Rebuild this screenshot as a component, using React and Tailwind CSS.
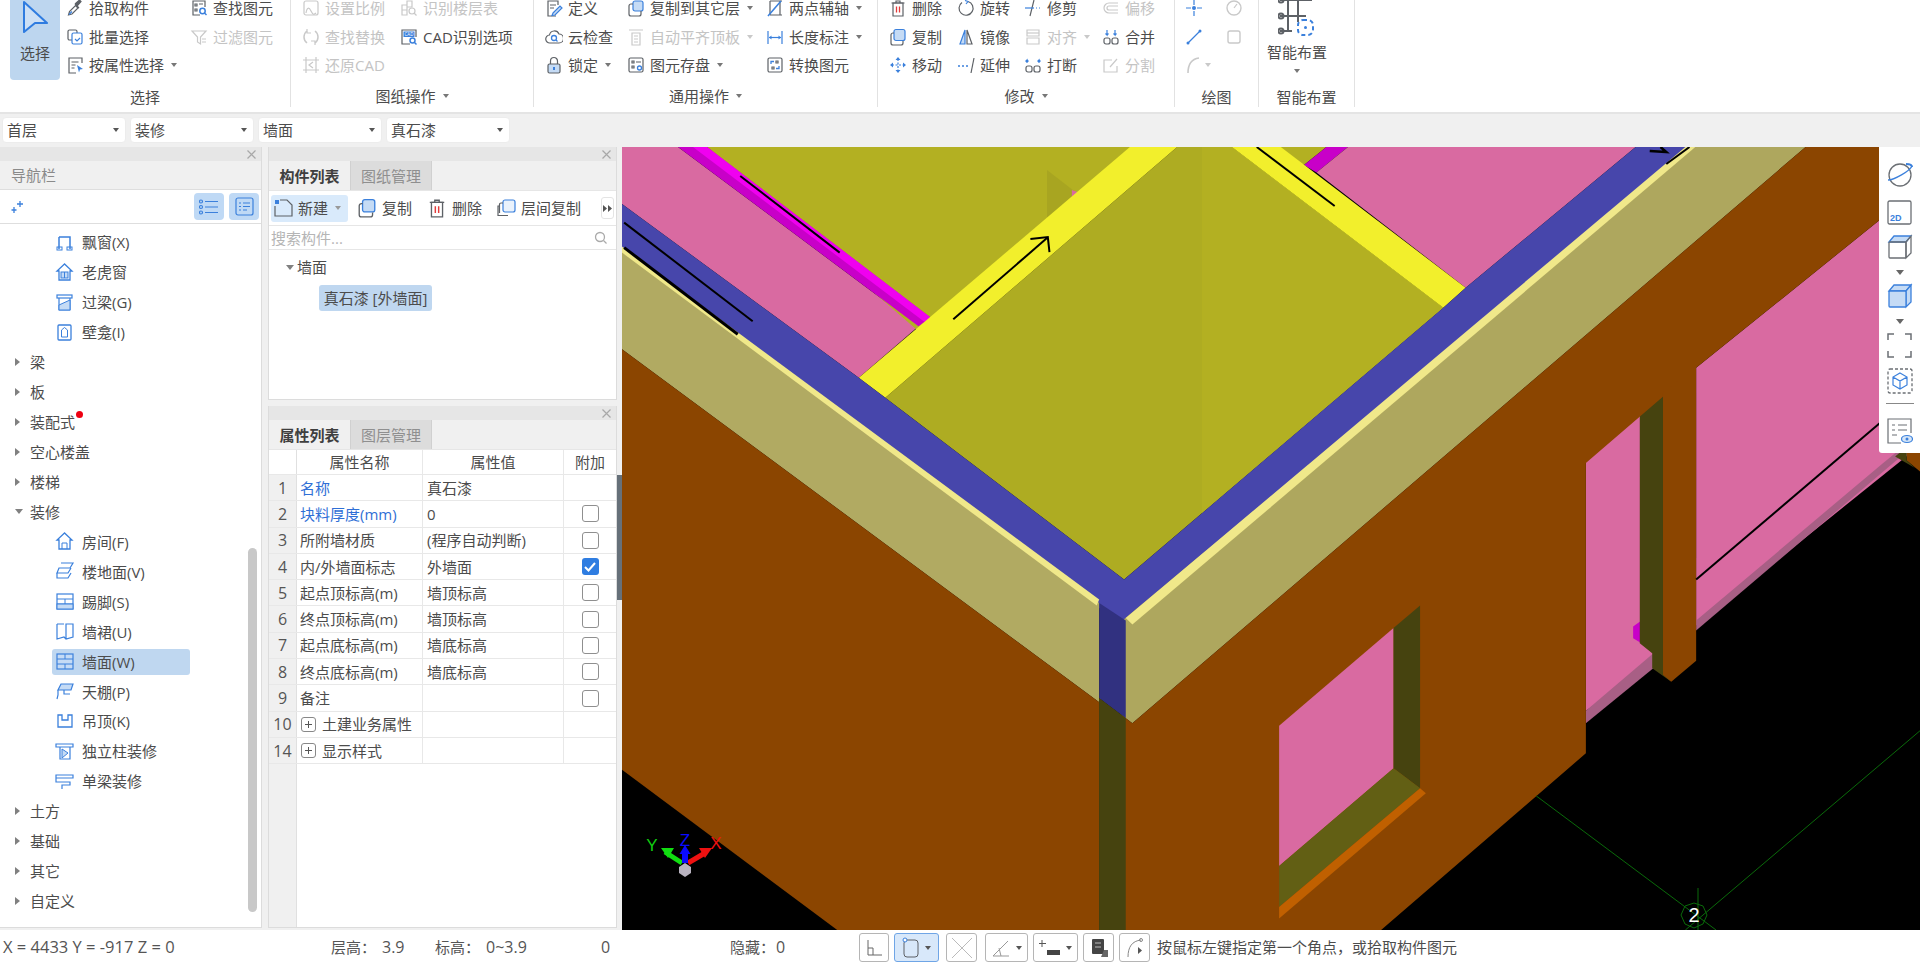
import React from "react";

const B = "#3b80dc";
const G = "#5d6166";
const L = "#c5dbf5";
const D = "#c9c9c9";

const paths = {
  pick: <><path d="M2.5 16l1-3.5 6-6 2.500 2.500-6 6z" stroke={G}/><path d="M3 15.500l3-3" stroke={B}/><path d="M9 5l4 4M11 7l4-4.500-1.500-1.500-4.500 4" stroke={G} fill={G}/></>,
  batch: <><rect x="2" y="2" width="9" height="10" rx="1.500" stroke={G}/><rect x="6" y="5" width="10" height="11" rx="1.500" fill="#fff" stroke={B}/><path d="M9 11l2 2 3-3" stroke={B}/></>,
  propSel: <><path d="M16 7V2H3v15h7" stroke={G}/><path d="M5.500 6h7M5.500 9h4M5.500 12h3" stroke={G}/><path d="M11 9l6 4-3 .5-1 3z" fill={B} stroke="none"/></>,
  find: <><path d="M10 16H3V2h12v6" stroke={G}/><path d="M5 5h2v2H5zM9 5h4M5 10h2v2H5z" stroke={G}/><circle cx="12.500" cy="12" r="2.700" stroke={B} strokeWidth="1.500"/><path d="M14.500 14l2 2" stroke={B} strokeWidth="1.500"/></>,
  filter: <><path d="M2 3h14l-5.500 6v7l-3-2V9z" stroke={D}/><path d="M12 11h4M12 14h4" stroke={D}/></>,
  scale: <><rect x="2" y="2" width="14" height="14" rx="2" stroke={D}/><path d="M4 14c1-6 3-6 5-2s3 4 5 2" stroke={D}/></>,
  tableDis: <><path d="M2 6h5v10H2zM7 2h5v6H7zM2 11h5" stroke={D}/><circle cx="12" cy="12" r="3" stroke={D}/><path d="M14 14l2.500 2.500" stroke={D}/></>,
  replace: <><path d="M5 3C1 6 1 12 5 15M13 3c4 3 4 9 0 12" stroke={D} strokeWidth="1.500"/><path d="M5 1v4H9M13 17v-4H9" stroke={D}/></>,
  restore: <><path d="M1 4h16M1 14h16M4 1v16M14 1v16" stroke={D}/><path d="M11 6l-4 3 4 3" stroke={D}/></>,
  cad: <><path d="M10 16H2V2h14v7" stroke={G}/><rect x="3.500" y="3.500" width="11" height="5.500" fill={B} stroke="none"/><text x="9" y="8" fontSize="4.500" fill="#fff" stroke="none" textAnchor="middle">CAD</text><circle cx="12.500" cy="12.500" r="2.500" stroke={B} strokeWidth="1.500"/><path d="M14.500 14.500l2 2" stroke={B} strokeWidth="1.500"/></>,
  define: <><path d="M13 6V2H3v15h8" stroke={G}/><path d="M5 6h6M5 9h4" stroke={G}/><path d="M8 14l7-7 2 2-7 7-3 .5z" fill={L} stroke={B}/></>,
  cloud: <><path d="M5 15a4 4 0 0 1-.5-8A5 5 0 0 1 14 6a4.500 4.500 0 0 1 0 9z" stroke={G}/><circle cx="9" cy="10" r="2.500" stroke={B} strokeWidth="1.300"/><path d="M11 12l1.500 1.500" stroke={B}/></>,
  lock: <><rect x="3" y="8" width="12" height="9" rx="1.500" fill={L} stroke={G}/><path d="M5.500 8V5a3.500 3.500 0 0 1 7 0v3" stroke={G}/><path d="M9 11v3" stroke={B} strokeWidth="2"/></>,
  copyTo: <><rect x="6" y="2" width="10" height="10" rx="2" fill={L} stroke={B}/><path d="M6 5H4a2 2 0 0 0-2 2v8a2 2 0 0 0 2 2h8a2 2 0 0 0 2-2v-3" stroke={G}/></>,
  level: <><path d="M2 2h14M5 5h8v12H5z" stroke={D}/><path d="M7 8h4M7 11h4M7 14h4" stroke={D}/></>,
  store: <><rect x="2" y="2" width="14" height="14" rx="1.500" stroke={G}/><path d="M5 5h2v2H5zM9 6h5M5 10h2v2H5z" stroke={G}/><circle cx="12.500" cy="12" r="2" stroke={B} strokeWidth="1.300"/></>,
  twoPt: <><path d="M4 2h12M4 16h12" stroke={G}/><path d="M4 2v14M14 2v14" stroke={G}/><path d="M2 17L15 2" stroke={B} strokeWidth="1.600"/></>,
  dim: <><path d="M2 3v13M16 3v13" stroke={B}/><path d="M3 9.500h12" stroke={B}/><path d="M3 9.500l2.500-2v4zM15 9.500l-2.500-2v4z" fill={B} stroke="none"/></>,
  convert: <><rect x="2" y="2" width="14" height="14" rx="1.500" stroke={G}/><path d="M5 8V5.500h3M13 10v2.500h-3" stroke={B} strokeWidth="1.300"/><path d="M6 11h2v2H6zM10 5h2v2h-2z" stroke={G}/></>,
  del: <><path d="M4 4h10v13H4z" stroke={G}/><path d="M2.500 4h13M7 4V2h4v2" stroke={G}/><path d="M7.500 7.500v6M10.500 7.500v6" stroke="#e23b3b" strokeWidth="1.300"/></>,
  copy: <><rect x="5" y="1.500" width="11" height="11" rx="2" fill={L} stroke={B}/><path d="M5 5H4a2 2 0 0 0-2 2v8a2 2 0 0 0 2 2h8a2 2 0 0 0 2-2v-2" stroke={G}/></>,
  move: <><path d="M9 3v12M3 9h12" stroke={B} strokeDasharray="2 1.500"/><path d="M9 1l-2.500 3h5zM9 17l-2.500-3h5zM1 9l3-2.500v5zM17 9l-3-2.500v5z" fill={B} stroke="none"/></>,
  rotate: <><path d="M11 2.500A7 7 0 1 1 5 3.500" stroke={G}/><path d="M8 1.500l3 1-2 2.500" stroke={B}/></>,
  mirror: <><path d="M8 2L3 16h5z" fill={L} stroke={B}/><path d="M10 2l5 14h-5z" stroke={G}/></>,
  extend: <><path d="M1 10h2M5 10h2M9 10h2" stroke={B} strokeWidth="1.300"/><path d="M17 2l-3 15" stroke={G}/></>,
  trim: <><path d="M10 1L6 17" stroke={G}/><path d="M1 9h9" stroke={B}/><path d="M12 9h1M15 9h1" stroke={B}/></>,
  align: <><path d="M3 2h12v6H3zM3 10h12v6H3z" stroke={D}/><path d="M3 5h12" stroke={D}/></>,
  breakI: <><rect x="2" y="10" width="6" height="6" rx="2" stroke={G}/><rect x="10" y="10" width="6" height="6" rx="2" stroke={G}/><path d="M3 7V4l-1.500 1.500M3 4l1.500 1.500M15 7V4l-1.500 1.500M15 4l1.500 1.500" stroke={B}/></>,
  merge: <><rect x="2" y="10" width="6" height="6" rx="2" stroke={G}/><rect x="10" y="10" width="6" height="6" rx="2" stroke={G}/><path d="M5 2v5l-1.500-1.500M5 7l1.500-1.500M13 2v5l-1.500-1.500M13 7l1.500-1.500" stroke={B}/></>,
  offset: <><path d="M16 4H7a5 5 0 0 0 0 10h9" stroke={D}/><path d="M16 7H7a2 2 0 0 0 0 4h9" stroke={D}/></>,
  split: <><path d="M10 4H2v12h13v-6" stroke={D}/><path d="M8 11l7-8" stroke={D}/></>,
  point: <><path d="M9 1v5M9 12v5M1 9h5M12 9h5" stroke={B}/><circle cx="9" cy="9" r="2" fill={B} stroke="none"/></>,
  circ: <><circle cx="9" cy="9" r="7" stroke={D} strokeWidth="1.400"/><path d="M9 9l3-4" stroke={D}/></>,
  line: <><path d="M3 15L15 3" stroke={B} strokeWidth="1.300"/><circle cx="3" cy="15" r="1.500" fill={B} stroke="none"/><circle cx="15" cy="3" r="1.500" fill={B} stroke="none"/></>,
  rect: <rect x="3" y="3" width="12" height="12" rx="2" stroke={D} strokeWidth="1.400"/>,
  arc: <path d="M3 17C3 8 7 3 14 2" stroke={D} strokeWidth="1.600"/>,
};

function Ic({ n, s = 18 }) {
  return (
    <svg width={s} height={s} viewBox="0 0 18 18" fill="none" strokeWidth="1.200" className="shrink-0">
      {paths[n]}
    </svg>
  );
}

function Caret({ dis, tight }) {
  return <span className={`inline-block ${tight ? "ml-[2px]" : "ml-[7px]"} w-0 h-0 border-l-[3.500px] border-r-[3.500px] border-t-[4px] border-l-transparent border-r-transparent ${dis ? "border-t-[#c9c9c9]" : "border-t-[#777]"}`} />;
}

function Tool({ i, t, c, d }) {
  return (
    <div className={`h-[28.500px] flex items-center whitespace-nowrap gap-[5px] ${d ? "text-[#c4c4c4]" : "text-[#4c4c4c]"}`}>
      <Ic n={i} />
      <span>{t}</span>
      {c && <Caret dis={d} tight />}
    </div>
  );
}

function Col({ w, items }) {
  return (
    <div className="flex flex-col shrink-0" style={{ width: w }}>
      {items.map((it) => (
        <Tool key={it.t + it.i} {...it} />
      ))}
    </div>
  );
}

function Group({ w, pl, label, caret, low, children }) {
  return (
    <div className="flex flex-col h-[107px] border-r border-[#e2e2e2] shrink-0" style={{ width: w }}>
      <div className="h-[88px] flex -mt-[6px]" style={{ paddingLeft: pl }}>
        {children}
      </div>
      <div className={`flex-1 flex items-center justify-center text-[#4c4c4c] ${low ? "pt-[6px]" : "pt-[2px]"}`}>
        {label}
        {caret && <Caret />}
      </div>
    </div>
  );
}

function Ribbon() {
  return (
    <div className="h-[114px] bg-white border-b-2 border-[#e4e4e4] flex overflow-hidden shrink-0">
      <Group w={291} pl={10} label="选择" low>
        <div className="w-[50px] h-[86px] mr-[6px] bg-[#bdd6ef] rounded-b-[4px] flex flex-col items-center pt-[3px] text-[#4c4c4c] shrink-0">
          <svg width="30" height="36" viewBox="0 0 30 36" fill="none">
            <path d="M4 5L27 26H15L4 35Z" fill="#cde0f5" stroke="#2f7ce0" strokeWidth="2" strokeLinejoin="round" />
          </svg>
          <span className="mt-[10px]">选择</span>
        </div>
        <Col w={124} items={[{ i: "pick", t: "拾取构件" }, { i: "batch", t: "批量选择" }, { i: "propSel", t: "按属性选择", c: 1 }]} />
        <Col w={100} items={[{ i: "find", t: "查找图元" }, { i: "filter", t: "过滤图元", d: 1 }]} />
      </Group>
      <Group w={243} pl={11} label="图纸操作" caret>
        <Col w={98} items={[{ i: "scale", t: "设置比例", d: 1 }, { i: "replace", t: "查找替换", d: 1 }, { i: "restore", t: "还原CAD", d: 1 }]} />
        <Col w={120} items={[{ i: "tableDis", t: "识别楼层表", d: 1 }, { i: "cad", t: "CAD识别选项" }]} />
      </Group>
      <Group w={344} pl={11} label="通用操作" caret>
        <Col w={82} items={[{ i: "define", t: "定义" }, { i: "cloud", t: "云检查" }, { i: "lock", t: "锁定", c: 1 }]} />
        <Col w={139} items={[{ i: "copyTo", t: "复制到其它层", c: 1 }, { i: "level", t: "自动平齐顶板", c: 1, d: 1 }, { i: "store", t: "图元存盘", c: 1 }]} />
        <Col w={105} items={[{ i: "twoPt", t: "两点辅轴", c: 1 }, { i: "dim", t: "长度标注", c: 1 }, { i: "convert", t: "转换图元" }]} />
      </Group>
      <Group w={297} pl={11} label="修改" caret>
        <Col w={68} items={[{ i: "del", t: "删除" }, { i: "copy", t: "复制" }, { i: "move", t: "移动" }]} />
        <Col w={67} items={[{ i: "rotate", t: "旋转" }, { i: "mirror", t: "镜像" }, { i: "extend", t: "延伸" }]} />
        <Col w={78} items={[{ i: "trim", t: "修剪" }, { i: "align", t: "对齐", c: 1, d: 1 }, { i: "breakI", t: "打断" }]} />
        <Col w={66} items={[{ i: "offset", t: "偏移", d: 1 }, { i: "merge", t: "合并" }, { i: "split", t: "分割", d: 1 }]} />
      </Group>
      <Group w={84} pl={10} label="绘图" low>
        <div className="flex flex-col w-[40px] shrink-0">
          <div className="h-[28.500px] flex items-center"><Ic n="point" /></div>
          <div className="h-[28.500px] flex items-center"><Ic n="line" /></div>
          <div className="h-[28.500px] flex items-center"><Ic n="arc" /><Caret dis tight /></div>
        </div>
        <div className="flex flex-col w-[24px] shrink-0">
          <div className="h-[28.500px] flex items-center"><Ic n="circ" /></div>
          <div className="h-[28.500px] flex items-center"><Ic n="rect" /></div>
        </div>
      </Group>
      <Group w={96} pl={0} label="智能布置" low>
        <div className="w-[76px] flex flex-col items-center text-[#4c4c4c]">
          <svg width="38" height="44" viewBox="0 0 38 44" fill="none" strokeWidth="2" className="shrink-0">
            <path d="M10 0v36M20 0v28M2 6h32M2 22h26M2 37h12" stroke="#5d6166" />
            <circle cx="3" cy="6" r="2.500" stroke="#5d6166" />
            <circle cx="3" cy="22" r="2.500" stroke="#5d6166" />
            <circle cx="3" cy="37" r="2.500" stroke="#5d6166" />
            <rect x="20" y="26" width="15" height="15" rx="5" stroke="#3b80dc" strokeDasharray="4 3" />
            <circle cx="27.500" cy="33.500" r="1.500" fill="#3b80dc" />
          </svg>
          <span className="mt-[4px] leading-[20px]">智能布置</span>
          <span className="mt-[7px] w-0 h-0 border-l-[3.500px] border-r-[3.500px] border-t-[4px] border-l-transparent border-r-transparent border-t-[#777]" />
        </div>
      </Group>
    </div>
  );
}

function Combo({ t }) {
  return (
    <div className="w-[124px] h-[26px] bg-white rounded-[4px] flex items-center justify-between pl-[4px] pr-[6px] text-[#4c4c4c] border border-[#ececec]">
      <span>{t}</span>
      <span className="w-0 h-0 border-l-[3px] border-r-[3px] border-t-[4px] border-l-transparent border-r-transparent border-t-[#555]" />
    </div>
  );
}

function Close() {
  return (
    <div className="h-[14px] bg-[#e6e6e6] flex items-center justify-end pr-[5px] shrink-0">
      <svg width="9" height="9" viewBox="0 0 9 9" stroke="#a8a8a8" strokeWidth="1.200"><path d="M0.500 0.500l8 8M8.500 0.500l-8 8" /></svg>
    </div>
  );
}

const navI = {
  bay: <><path d="M4 4h11v12M4 4v12" stroke={B} strokeWidth="1.500" /><rect x="2" y="14" width="5" height="3" stroke={B} /><rect x="12" y="14" width="5" height="3" stroke={B} /></>,
  dormer: <><path d="M9.500 1L2 8h2v9h11V8h2z" stroke={B} strokeWidth="1.300" /><rect x="6" y="9" width="7" height="6" fill={L} stroke={B} /><path d="M9.500 9v6" stroke={B} /></>,
  lintel: <><rect x="2" y="2" width="15" height="3" stroke={B} strokeWidth="1.200" /><path d="M4 5v12h11V5" stroke={B} strokeWidth="1.200" /><path d="M4 17V12l11-5v10z" fill={L} stroke={B} /></>,
  niche: <><rect x="3" y="2" width="13" height="15" rx="1" stroke={B} strokeWidth="1.300" /><path d="M6.500 14V7l3-2.500 3 2.500v7z" stroke={B} /></>,
  room: <><path d="M9.500 1L2 8h2v9h11V8h2z" stroke={B} strokeWidth="1.300" /><path d="M7 17v-6h5v6" stroke={B} /></>,
  floor: <><path d="M6 1h12l-3 5H4L2 11h11l3-5" stroke={B} strokeWidth="1.200" /><path d="M2 11v5h11l3-5" stroke={B} strokeWidth="1.200" /></>,
  skirt: <><rect x="2" y="2" width="16" height="15" stroke={B} strokeWidth="1.200" /><path d="M2 7h16M2 12h16M10 7v5" stroke={B} /><rect x="2" y="12" width="16" height="5" fill={L} stroke={B} /></>,
  dado: <><path d="M2 2v15l7-2 2 2 7-2V2h-7v15M9 2H2" stroke={B} strokeWidth="1.200" /></>,
  wall: <><rect x="2" y="2" width="16" height="15" fill={L} stroke={B} strokeWidth="1.200" /><path d="M2 7h16M2 12h16M10 2v5M10 12v5" stroke={B} /></>,
  ceil: <><path d="M6 2h12l-2 6H3z" fill={L} stroke={B} strokeWidth="1.200" /><path d="M3 8v5l-1 4M9 8v4h6" stroke={B} strokeWidth="1.200" /></>,
  drop: <><path d="M3 3v12h14V3h-4v5H7V3z" stroke={B} strokeWidth="1.300" /></>,
  col: <><path d="M1 2h17v3H1zM5 5v12h10V5" stroke={B} strokeWidth="1.200" /><path d="M7 7l6 4-6 5z" fill={L} stroke={B} /></>,
  beam: <><path d="M1 3h17v3H1zM1 6v4h14v3H7v4" stroke={B} strokeWidth="1.200" /></>,
};

function NavItem({ i, t, sel }) {
  return (
    <div className="h-[29.950px] flex items-center pl-[52px]">
      <div className={`w-[138px] h-[26px] flex items-center rounded-[3px] pl-[3px] ${sel ? "bg-[#bfd7f0]" : ""}`}>
        <svg width="20" height="19" viewBox="0 0 20 19" fill="none" className="shrink-0">{navI[i]}</svg>
        <span className="ml-[7px] whitespace-nowrap">{t}</span>
      </div>
    </div>
  );
}

function NavGroup({ t, open, dot }) {
  return (
    <div className="h-[29.950px] flex items-center pl-[15px]">
      {open ? (
        <span className="w-0 h-0 border-l-[4px] border-r-[4px] border-t-[5px] border-l-transparent border-r-transparent border-t-[#808080] mr-[7px]" />
      ) : (
        <span className="w-0 h-0 border-t-[4px] border-b-[4px] border-l-[5px] border-t-transparent border-b-transparent border-l-[#808080] mr-[10px]" />
      )}
      <span className="relative whitespace-nowrap">
        {t}
        {dot && <span className="absolute -right-[8px] -top-[1px] w-[7px] h-[7px] rounded-full bg-[#ee0011]" />}
      </span>
    </div>
  );
}

function Nav() {
  return (
    <div className="w-[262px] h-[781px] bg-white border-r border-b border-[#dcdcdc] flex flex-col shrink-0 overflow-hidden">
      <Close />
      <div className="h-[29px] bg-[#f0f0f0] border-b border-[#dedede] flex items-center pl-[11px] text-[#8a8a8a] shrink-0">导航栏</div>
      <div className="h-[34px] border-b border-[#dedede] flex items-center pl-[11px] pr-[2px] shrink-0">
        <svg width="14" height="14" viewBox="0 0 14 14" stroke={B} strokeWidth="1.300" fill="none"><path d="M9 1v6M6 4h6M3 7v6M0.500 10h5" /></svg>
        <div className="flex-1" />
        <div className="w-[30px] h-[27px] bg-[#bfd9f5] rounded-[4px] flex items-center justify-center">
          <svg width="20" height="16" viewBox="0 0 20 16" fill="none" stroke={B} strokeWidth="1.200"><circle cx="2" cy="2.500" r="1.500" /><circle cx="2" cy="8" r="1.500" /><circle cx="2" cy="13.500" r="1.500" /><path d="M6 2.500h13M6 8h13M6 13.500h13" /></svg>
        </div>
        <div className="w-[30px] h-[27px] ml-[5px] bg-[#bfd9f5] rounded-[4px] flex items-center justify-center">
          <svg width="19" height="19" viewBox="0 0 19 19" fill="none" stroke={B} strokeWidth="1.200"><rect x="1" y="1" width="17" height="17" rx="2" /><path d="M4 6h2M8 6h7M4 9.500h2M8 9.500h7M4 13h2M8 13h4" /></svg>
        </div>
      </div>
      <div className="flex-1 flex pt-[3.500px] text-[#4c4c4c] text-[15px] overflow-hidden">
        <div className="flex-1 flex flex-col min-w-0">
          <NavItem i="bay" t="飘窗(X)" />
          <NavItem i="dormer" t="老虎窗" />
          <NavItem i="lintel" t="过梁(G)" />
          <NavItem i="niche" t="壁龛(I)" />
          <NavGroup t="梁" />
          <NavGroup t="板" />
          <NavGroup t="装配式" dot />
          <NavGroup t="空心楼盖" />
          <NavGroup t="楼梯" />
          <NavGroup t="装修" open />
          <NavItem i="room" t="房间(F)" />
          <NavItem i="floor" t="楼地面(V)" />
          <NavItem i="skirt" t="踢脚(S)" />
          <NavItem i="dado" t="墙裙(U)" />
          <NavItem i="wall" t="墙面(W)" sel />
          <NavItem i="ceil" t="天棚(P)" />
          <NavItem i="drop" t="吊顶(K)" />
          <NavItem i="col" t="独立柱装修" />
          <NavItem i="beam" t="单梁装修" />
          <NavGroup t="土方" />
          <NavGroup t="基础" />
          <NavGroup t="其它" />
          <NavGroup t="自定义" />
        </div>
        <div className="w-[14px] shrink-0 pl-[1px] pt-[320px]">
          <div className="w-[9px] h-[364px] rounded-[5px] bg-[#c8c8c8]" />
        </div>
      </div>
    </div>
  );
}

function Tabs({ a, b }) {
  return (
    <div className="h-[30px] bg-[#f0f0f0] flex shrink-0 border-b border-[#e6e6e6]">
      <div className="w-[81px] flex items-center justify-center font-bold text-[#3f3f3f]">{a}</div>
      <div className="w-[82px] bg-[#dcdcdc] flex items-center justify-center text-[#8f8f8f] border-x border-[#d0d0d0]">{b}</div>
    </div>
  );
}

function CompPanel() {
  return (
    <div className="h-[253px] bg-white border-x border-b border-[#dcdcdc] flex flex-col overflow-hidden shrink-0">
      <Close />
      <Tabs a="构件列表" b="图纸管理" />
      <div className="h-[35px] border-b border-[#e6e6e6] flex items-center pl-[2px] text-[#4c4c4c] shrink-0">
        <div className="w-[77px] h-[27px] bg-[#d9eafb] rounded-[3px] flex items-center pl-[2px]">
          <svg width="20" height="20" viewBox="0 0 20 20" fill="none" stroke="#5d6166" strokeWidth="1.200"><path d="M7 2h7l5 5v11H2V8" /><path d="M2 2h4v4H2z" fill={B} stroke="none" /></svg>
          <span className="ml-[5px]">新建</span>
          <span className="ml-[7px] w-0 h-0 border-l-[3px] border-r-[3px] border-t-[4px] border-l-transparent border-r-transparent border-t-[#999]" />
        </div>
        <div className="ml-[9px]"><Ic n="copy" s={20} /></div>
        <span className="ml-[5px]">复制</span>
        <div className="ml-[15px]"><Ic n="del" s={20} /></div>
        <span className="ml-[5px]">删除</span>
        <div className="ml-[14px]">
          <svg width="20" height="18" viewBox="0 0 20 18" fill="none" strokeWidth="1.200"><rect x="7" y="1" width="12" height="12" rx="2" stroke={B} fill="#eaf2fc" /><path d="M7 4H5a1.500 1.500 0 0 0-1.500 1.500V14M3.500 7H2v9.500h10" stroke="#5d6166" /></svg>
        </div>
        <span className="ml-[5px] whitespace-nowrap">层间复制</span>
        <div className="flex-1" />
        <div className="w-[13px] h-[22px] mr-[2px] border border-[#e4e4e4] rounded-[3px] flex items-center justify-center">
          <svg width="9" height="7" viewBox="0 0 9 7" fill="#555"><path d="M0 0l4 3.500-4 3.500zM5 0l4 3.500-4 3.500z" /></svg>
        </div>
      </div>
      <div className="h-[24px] border-b border-[#e6e6e6] flex items-center justify-between pl-[2px] pr-[9px] text-[#b5b5b5] shrink-0">
        <span>搜索构件...</span>
        <svg width="13" height="13" viewBox="0 0 13 13" fill="none" stroke="#aaa" strokeWidth="1.300"><circle cx="6" cy="6" r="4.500" /><path d="M9.500 9.500l3 3" /></svg>
      </div>
      <div className="flex-1 pt-[4px] pl-[17px] text-[#4c4c4c]">
        <div className="h-[26px] flex items-center">
          <span className="w-0 h-0 border-l-[4px] border-r-[4px] border-t-[5px] border-l-transparent border-r-transparent border-t-[#808080]" />
          <span className="ml-[3px]">墙面</span>
        </div>
        <div className="ml-[33px] mt-[5px] w-[113px] h-[26px] bg-[#bfd7f0] rounded-[3px] flex items-center justify-center whitespace-nowrap">真石漆 [外墙面]</div>
      </div>
    </div>
  );
}

function Check({ on }) {
  return on ? (
    <div className="w-[17px] h-[17px] rounded-[3px] bg-[#2f7de1] flex items-center justify-center">
      <svg width="12" height="10" viewBox="0 0 12 10" fill="none" stroke="#fff" strokeWidth="2"><path d="M1 5l3.500 3.500L11 1" /></svg>
    </div>
  ) : (
    <div className="w-[17px] h-[17px] rounded-[3px] border border-[#8f8f8f] bg-white" />
  );
}

const rows = [
  ["1", "名称", "真石漆", 0, 1],
  ["2", "块料厚度(mm)", "0", 1, 1],
  ["3", "所附墙材质", "(程序自动判断)", 1],
  ["4", "内/外墙面标志", "外墙面", 2],
  ["5", "起点顶标高(m)", "墙顶标高", 1],
  ["6", "终点顶标高(m)", "墙顶标高", 1],
  ["7", "起点底标高(m)", "墙底标高", 1],
  ["8", "终点底标高(m)", "墙底标高", 1],
  ["9", "备注", "", 1],
  ["10", "土建业务属性", "", 0, 0, 1],
  ["14", "显示样式", "", 0, 0, 1],
];

function Row({ r }) {
  const [n, name, val, chk, blue, plus] = r;
  return (
    <div className="h-[26.300px] flex border-b border-[#e8e8e8]">
      <div className="w-[28px] bg-[#f0f0f0] border-r border-[#e0e0e0] flex items-center justify-center text-[#555] text-[16px] shrink-0">{n}</div>
      <div className={`w-[126px] border-r border-[#e8e8e8] flex items-center pl-[3px] whitespace-nowrap shrink-0 ${blue ? "text-[#2f6fd6]" : ""}`}>
        {plus ? (
          <>
            <span className="w-[15px] h-[15px] rounded-[3px] border border-[#888] flex items-center justify-center mr-[6px] ml-[1px]">
              <svg width="7" height="7" viewBox="0 0 7 7" stroke="#555"><path d="M3.500 0v7M0 3.500h7" /></svg>
            </span>
            {name}
          </>
        ) : (
          name
        )}
      </div>
      <div className="w-[141px] border-r border-[#e8e8e8] flex items-center pl-[4px] whitespace-nowrap shrink-0">{val}</div>
      <div className="w-[52px] flex items-center justify-center shrink-0">{chk ? <Check on={chk === 2} /> : null}</div>
    </div>
  );
}

function PropPanel() {
  return (
    <div className="flex-1 bg-white border-x border-b border-[#dcdcdc] flex flex-col overflow-hidden">
      <Close />
      <Tabs a="属性列表" b="图层管理" />
      <div className="flex-1 flex flex-col text-[#4c4c4c]">
        <div className="h-[25px] flex border-b border-[#e8e8e8] shrink-0">
          <div className="w-[28px] border-r border-[#e0e0e0] shrink-0" />
          <div className="w-[126px] border-r border-[#e8e8e8] flex items-center justify-center shrink-0">属性名称</div>
          <div className="w-[141px] border-r border-[#e8e8e8] flex items-center justify-center shrink-0">属性值</div>
          <div className="w-[52px] flex items-center justify-center shrink-0">附加</div>
        </div>
        {rows.map((r) => (
          <Row key={r[0]} r={r} />
        ))}
        <div className="flex-1 w-[28px] bg-[#f0f0f0] border-r border-[#e0e0e0]" />
      </div>
    </div>
  );
}

const polys = [
  ["#d96aa1", "0,4 70,4 360,362 288,465 0,115"],
  ["#b3b022", "105,4 640,4 360,372"],
  ["#c800c8", "70,4 105,4 375,345 360,362"],
  ["#f000f0", "88,4 105,4 375,345 367,353"],
  ["#a8a521", "515,50 550,95 515,150"],
  ["#d96aa1", "545,90 553,95 545,105"],
  ["#aeac22", "672,4 738,4 993,325 608,868 320,505"],
  ["#b3b022", "702,4 738,4 993,325 702,735"],
  ["#f2ef2c", "615,4 672,4 320,505 288,465"],
  ["#b3b022", "780,4 852,4 825,40"],
  ["#c800c8", "852,4 878,4 840,55 825,40"],
  ["#d96aa1", "878,4 1225,4 1020,285 840,55"],
  ["#f2ef2c", "738,4 797,4 1020,285 993,325"],
  ["#4746ab", "0,115 288,465 320,505 608,868 993,325 1020,285 1225,4 1295,4 612,955 578,925 0,210"],
  ["#b1aa62", "0,205 578,915 578,1113 0,405"],
  ["#aea75e", "1290,4 1430,4 618,1155 606,1140 606,950"],
  ["#f0e88a", "0,200 578,908 575,920 0,212"],
  ["#f0e88a", "1285,4 1297,4 618,958 610,945"],
  ["#313180", "578,915 610,950 610,1145 578,1105"],
  ["#8b4500", "0,405 578,1113 578,1568 262,1568 0,1245"],
  ["#46430f", "578,1105 610,1145 610,1568 578,1568"],
  ["#d96aa1", "1298,445 1568,85 1568,600 1298,960"],
  ["#a85f85", "1298,950 1520,640 1568,575 1568,590 1298,970"],
  ["#8b4500", "1552,600 1568,600 1568,652 1552,630"],
  ["#46430f", "1538,622 1552,603 1552,630 1562,645"],
  ["#d96aa1", "1165,630 1262,490 1262,1020 1165,1130"],
  ["#a85f85", "1165,1130 1250,1010 1250,1040 1165,1155"],
  ["#c800c8", "1222,962 1232,950 1232,995 1222,985"],
  ["#46430f", "1230,520 1262,470 1262,1060 1268,1072 1245,1045 1245,1015 1230,995"],
  ["#8b4500", "606,1140 618,1155 1430,4 1568,4 1568,85 1298,445 1260,500 1165,635 1165,1215 918,1568 606,1568"],
  ["#8b4500", "1258,495 1298,440 1298,1030 1268,1072 1258,1058"],
  ["#46430f", "578,1105 610,1145 610,1568 578,1568"],
  ["#d96aa1", "795,1160 933,965 933,1245 795,1440"],
  ["#46430f", "933,965 965,920 965,1285 933,1245"],
  ["#625f14", "795,1440 933,1245 965,1285 795,1522"],
  ["#c06000", "795,1522 965,1285 972,1295 795,1545"],
];

const lines = [
  ["#000", "402,348 515,186", 2],
  ["#000", "495,188 516,184 518,214", 2],
  ["#000", "145,62 265,215", 2],
  ["#000", "5,155 160,352", 2],
  ["#000", "5,205 142,378", 3],
  ["#000", "768,4 862,122", 2],
  ["#000", "1262,38 1290,4", 2],
  ["#000", "1242,12 1262,14 1255,4", 2.500],
  ["#000", "1298,868 1520,555", 2],
  ["#0a6a0a", "1105,1300 1322,1568", 1],
  ["#0a6a0a", "1568,1170 1285,1568", 1],
];

function Scene() {
  return (
    <svg viewBox="2.400 4 1565.600 1564" preserveAspectRatio="none" className="absolute inset-0 w-full h-full">
      {polys.map(([c, p], i) => (
        <polygon key={i} fill={c} points={p} />
      ))}
      {lines.map(([c, p, w], i) => (
        <polyline key={i} fill="none" stroke={c} strokeWidth={w} vectorEffect="non-scaling-stroke" points={p} />
      ))}
    </svg>
  );
}

function Overlay() {
  return (
    <svg viewBox="622 147 1298 783" className="absolute inset-0 w-full h-full">
      <g transform="translate(685,868)">
        <path d="M-3 -5L-20 -16" stroke="#11dd11" strokeWidth="5" />
        <path d="M-24 -20l13 0-6 10z" fill="#11dd11" />
        <path d="M3 -5L20 -15" stroke="#ee1111" strokeWidth="5" />
        <path d="M27 -20l-13 0 6 10z" fill="#ee1111" />
        <path d="M0 -5V-15" stroke="#0a0aff" strokeWidth="6" />
        <path d="M0 -23l5.500 9h-11z" fill="#0a0aff" />
        <path d="M0 -5l6 4v6l-6 4-6-4v-6z" fill="#b9b3c0" />
      </g>
      <text x="652" y="851" textAnchor="middle" fontSize="17" fill="#11cc11" fontFamily="Liberation Sans">Y</text>
      <text x="685" y="846" textAnchor="middle" fontSize="17" fill="#0a0aff" fontFamily="Liberation Sans">Z</text>
      <text x="716" y="849" textAnchor="middle" fontSize="17" fill="#ee1111" fontFamily="Liberation Sans">X</text>
      <polygon points="1694,903 1703,906 1707,915 1703,924 1694,928 1685,924 1681,915 1685,906" fill="none" stroke="#0a6a0a" />
      <path d="M1698 888V930" stroke="#0a6a0a" />
      <text x="1694" y="922" textAnchor="middle" fontSize="20" fill="#ffffff" fontFamily="Liberation Sans">2</text>
    </svg>
  );
}

function SideBar() {
  const g = "#6b6f74";
  return (
    <div className="absolute right-0 top-0 w-[41px] h-[306px] bg-white rounded-bl-[3px] flex flex-col items-center pt-[14px]">
      <svg width="28" height="28" viewBox="0 0 28 28" fill="none" strokeWidth="1.300" className="shrink-0"><ellipse cx="14" cy="14" rx="11" ry="11" stroke={g} /><path d="M2 19C8 19 24 10 26 5" stroke={B} /><path d="M20 3c4 0 6 1 6 3" stroke={B} strokeWidth="2" /></svg>
      <svg width="25" height="25" viewBox="0 0 25 25" fill="none" className="mt-[10.500px] shrink-0"><rect x="1" y="1" width="23" height="23" rx="1.500" stroke={g} strokeWidth="1.300" /><text x="3" y="21" fontSize="9" fontWeight="700" fill={B} fontFamily="Liberation Sans">2D</text></svg>
      <svg width="26" height="26" viewBox="0 0 26 26" fill="none" strokeWidth="1.300" className="mt-[9.500px] shrink-0"><path d="M2 8l5-6h17l-5 6z" fill={L} stroke={B} /><path d="M19 8l5-6v17l-5 5z" stroke={g} /><rect x="2" y="8" width="17" height="16" rx="1" stroke={g} /></svg>
      <span className="mt-[9.500px] w-0 h-0 shrink-0 border-l-[4px] border-r-[4px] border-t-[5px] border-l-transparent border-r-transparent border-t-[#666]" />
      <svg width="26" height="26" viewBox="0 0 26 26" fill={L} stroke={B} strokeWidth="1.300" className="mt-[8.500px] shrink-0"><path d="M2 8l5-6h17l-5 6z" /><path d="M19 8l5-6v17l-5 5z" /><rect x="2" y="8" width="17" height="16" rx="1" /></svg>
      <span className="mt-[9.500px] w-0 h-0 shrink-0 border-l-[4px] border-r-[4px] border-t-[5px] border-l-transparent border-r-transparent border-t-[#666]" />
      <svg width="25" height="25" viewBox="0 0 25 25" fill="none" stroke={g} strokeWidth="1.500" className="mt-[9px] shrink-0"><path d="M1 7V1h6M18 1h6v6M24 18v6h-6M7 24H1v-6" /></svg>
      <svg width="26" height="26" viewBox="0 0 26 26" fill="none" className="mt-[10.500px] shrink-0"><rect x="1" y="1" width="24" height="24" rx="2" stroke={g} strokeDasharray="3 2" strokeWidth="1.300" /><path d="M13 5l7 4v8l-7 4-7-4V9zM6 9l7 4 7-4M13 13v8" stroke={B} strokeWidth="1.200" /></svg>
      <div className="w-[28px] h-px bg-[#888] mt-[9px] shrink-0" />
      <svg width="26" height="26" viewBox="0 0 26 26" fill="none" strokeWidth="1.200" className="mt-[14px] shrink-0"><path d="M14 25H1V1h23v14" stroke={g} /><path d="M5 7h3M11 7h9M5 12h3M11 12h9M5 17h5" stroke={g} /><ellipse cx="20" cy="21" rx="5.500" ry="3.500" fill="#d5e5f7" stroke={B} /><circle cx="20" cy="21" r="1.500" fill={B} /></svg>
    </div>
  );
}

function Btn({ w, on, children, caret }) {
  return (
    <div className={`h-[29px] rounded-[3px] border flex items-center justify-center gap-[5px] shrink-0 ${on ? "border-[#6fa5e6] bg-[#d8e8fa]" : "border-[#b5b5b5] bg-white"}`} style={{ width: w }}>
      {children}
      {caret && <span className="w-0 h-0 border-l-[3px] border-r-[3px] border-t-[4px] border-l-transparent border-r-transparent border-t-[#555]" />}
    </div>
  );
}

function Status() {
  return (
    <div className="h-[33px] bg-white flex items-center text-[15px] text-[#555] shrink-0">
      <span className="w-[331px] pl-[3px] shrink-0 whitespace-nowrap text-[16.500px]">X = 4433 Y = -917 Z = 0</span>
      <span className="w-[104px] shrink-0 whitespace-nowrap">层高：<span className="ml-[6px] text-[16px]">3.9</span></span>
      <span className="w-[166px] shrink-0 whitespace-nowrap">标高：<span className="ml-[6px] text-[16px]">0~3.9</span></span>
      <span className="w-[129px] shrink-0 text-[16px]">0</span>
      <span className="w-[129px] shrink-0 whitespace-nowrap">隐藏：<span className="ml-[1px] text-[16px]">0</span></span>
      <div className="flex items-center gap-[5px] pt-[2px]">
        <Btn w={30}>
          <svg width="18" height="18" viewBox="0 0 18 18" fill="none" stroke="#666"><path d="M3 1v15h14M3 9h5v7" /></svg>
        </Btn>
        <Btn w={45} on caret>
          <svg width="18" height="22" viewBox="0 0 18 22" fill="none" stroke="#5d6166"><rect x="2" y="3" width="14" height="17" rx="3" /><circle cx="3" cy="3" r="2" fill="#fff" stroke={B} /></svg>
        </Btn>
        <div className="ml-[2px]">
          <Btn w={31}>
            <svg width="22" height="22" viewBox="0 0 22 22" stroke="#bbb" fill="none"><path d="M1 1l20 20M21 1L1 21" /></svg>
          </Btn>
        </div>
        <div className="ml-[3px]">
          <Btn w={43} caret>
            <svg width="20" height="18" viewBox="0 0 20 18" fill="none" stroke="#999"><path d="M2 17L17 2M2 17h16M8 9l2 8" /></svg>
          </Btn>
        </div>
        <Btn w={45} caret>
          <svg width="22" height="20" viewBox="0 0 22 20" fill="none"><path d="M3 2v7M0 5.500h7" stroke="#555" /><rect x="8" y="12" width="13" height="5" fill="#444" /></svg>
        </Btn>
        <Btn w={31}>
          <svg width="20" height="22" viewBox="0 0 20 22"><rect x="3" y="2" width="12" height="15" rx="1" fill="#444" /><path d="M15 13h4v7h-7z" fill="#666" /><path d="M6 6h6M6 10h6" stroke="#bbb" /></svg>
        </Btn>
        <Btn w={31}>
          <svg width="20" height="22" viewBox="0 0 20 22" fill="none"><path d="M3 20C3 10 7 4 16 3" stroke="#888" /><circle cx="16" cy="3" r="1.500" stroke="#888" /><path d="M13 10l4 3.500-4 3.500z" fill="#555" /></svg>
        </Btn>
      </div>
      <span className="ml-[7px] whitespace-nowrap text-[#4c4c4c] text-[15px]">按鼠标左键指定第一个角点，或拾取构件图元</span>
    </div>
  );
}

export default function App() {
  return (
    <div className="w-[1920px] h-[963px] overflow-hidden flex flex-col bg-[#f0f0f0] text-[15px] leading-[20px] font-['Open_Sans','Noto_Sans_CJK_SC',sans-serif]">
      <Ribbon />
      <div className="h-[33px] flex items-start gap-[4px] pl-[2px] pt-[3px] shrink-0">
        <Combo t="首层" />
        <Combo t="装修" />
        <Combo t="墙面" />
        <Combo t="真石漆" />
      </div>
      <div className="h-[783px] flex shrink-0">
        <Nav />
        <div className="w-[6px] shrink-0" />
        <div className="w-[349px] h-[781px] flex flex-col gap-[6px] shrink-0">
          <CompPanel />
          <PropPanel />
        </div>
        <div className="w-[5px] shrink-0 pt-[328px]">
          <div className="h-[125px] bg-[#667079]" />
        </div>
        <div className="relative w-[1298px] h-[783px] bg-black overflow-hidden shrink-0">
          <Scene />
          <Overlay />
          <SideBar />
        </div>
      </div>
      <Status />
    </div>
  );
}
